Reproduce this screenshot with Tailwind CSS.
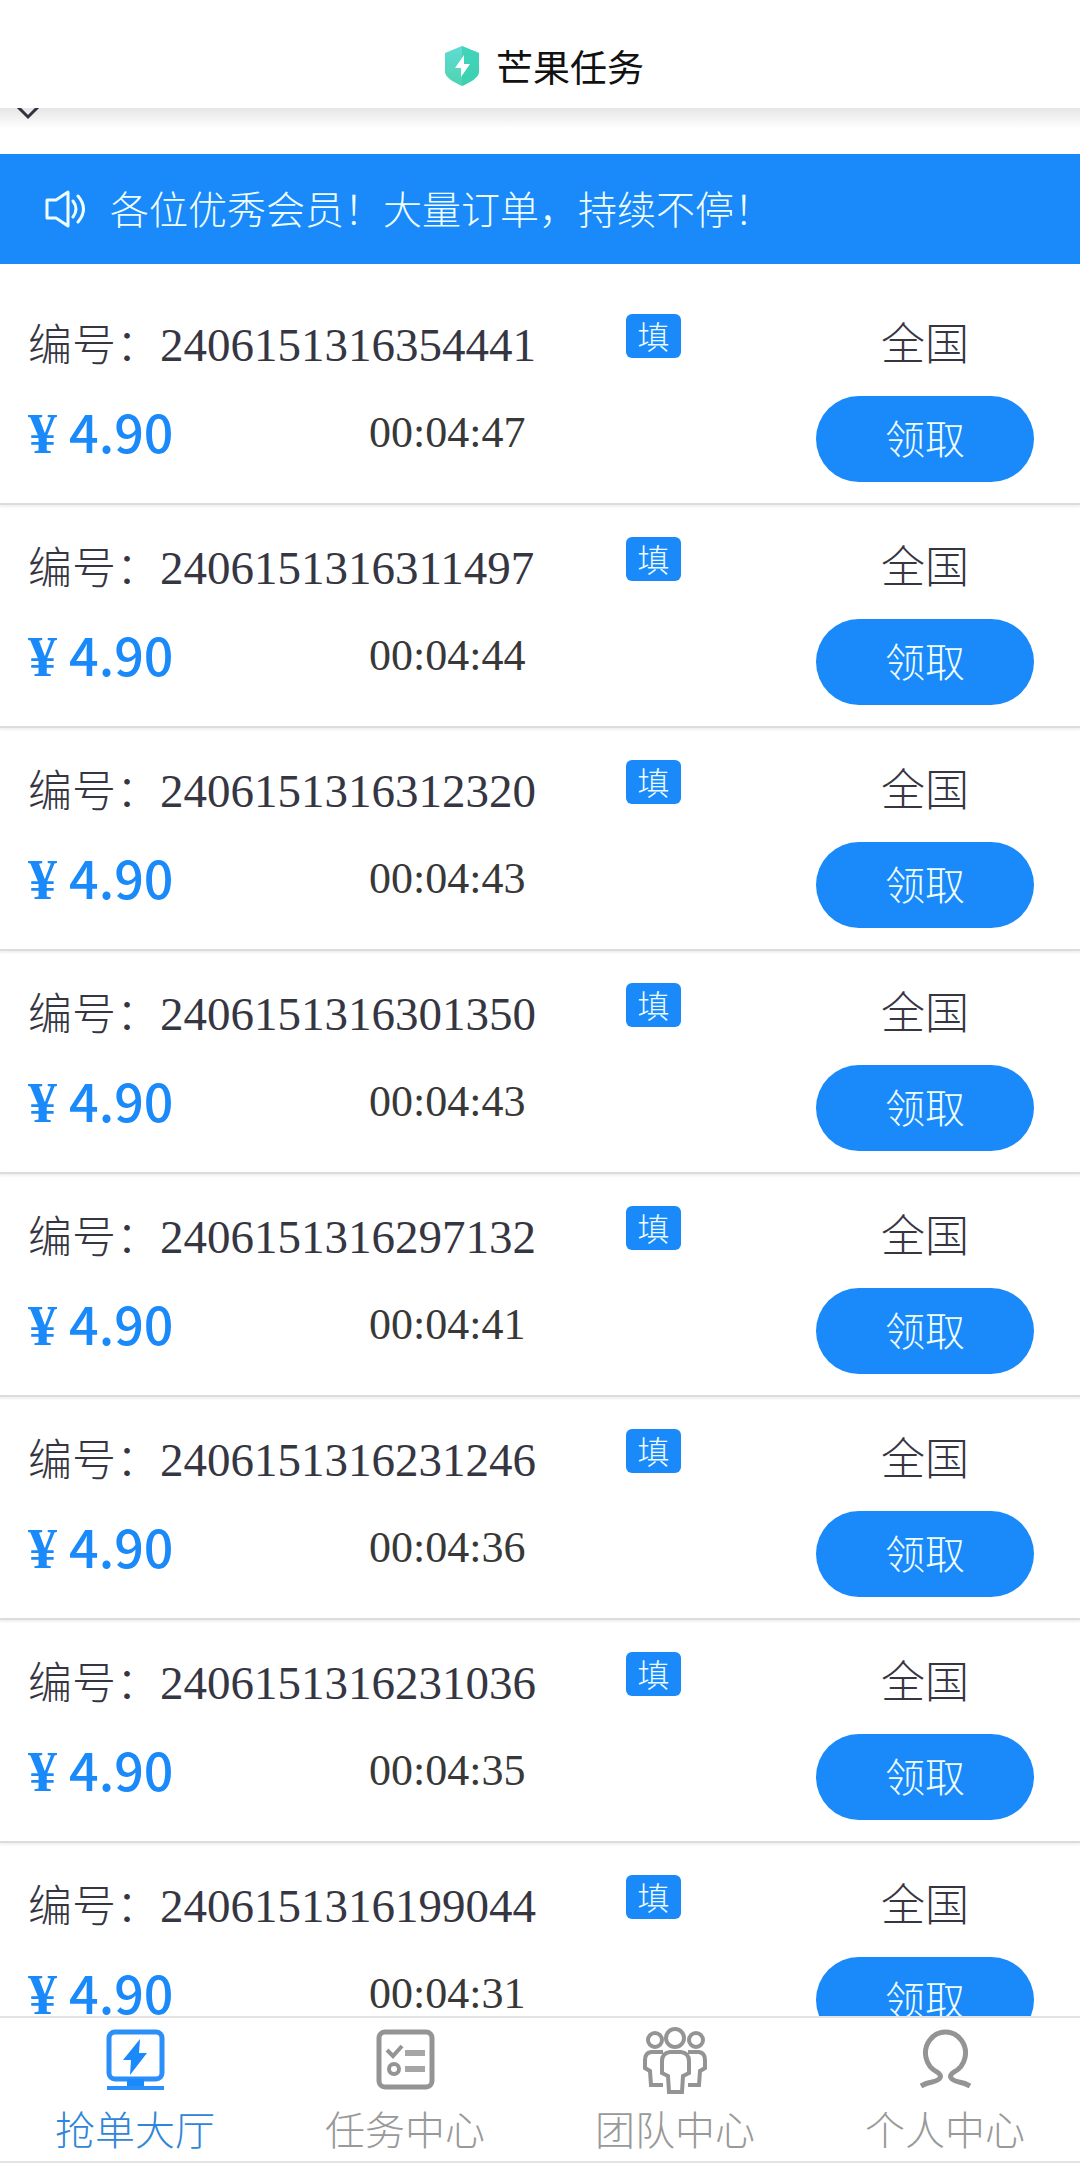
<!DOCTYPE html>
<html lang="zh-CN">
<head>
  <meta charset="UTF-8" />
  <meta name="viewport" content="width=device-width, initial-scale=1.0" />
  <title>芒果任务</title>
  <script src="https://cdn.jsdelivr.net/npm/@tailwindcss/browser@4"></script>
</head>
<body class="bg-white font-['Liberation_Serif','Noto_Sans_CJK_SC',serif] font-light text-[#363642]">
  <div class="h-screen flex flex-col overflow-hidden">
    <header class="h-27 shrink-0 flex items-end justify-center gap-4 pb-[18px] pl-2">
      <svg class="w-9 h-10 mb-1" viewBox="0 0 36 40">
        <defs>
          <linearGradient id="shield" x1="0" y1="0" x2="0" y2="1">
            <stop offset="0" stop-color="#5fdcd3" />
            <stop offset="1" stop-color="#4fd3b0" />
          </linearGradient>
        </defs>
        <path fill="url(#shield)" d="M18 0 35 7v19c0 5-8 10-17 14C9 36 1 31 1 26V7z" />
        <path fill="#2fcfae" fill-opacity=".6" d="M18 0 35 7v19c0 5-8 10-17 14z" />
        <path fill="#fff" d="M20 9 11 22h6v9l9-13h-6z" />
      </svg>
      <h1 class="font-['Noto_Sans_CJK_SC',sans-serif] font-normal text-[37px] leading-12 text-[#111]">芒果任务</h1>
    </header>

    <main class="flex-1 min-h-0 overflow-hidden">
      <div class="h-[46px] bg-linear-to-b from-[#e6e6e6] to-white to-45%">
        <svg class="w-6 h-3 ml-4" viewBox="0 0 24 12" fill="none" stroke="#33333f" stroke-width="3"><path d="M1-2 12 9 23-2" /></svg>
      </div>

      <div class="h-[110px] bg-[#1a89fa] text-[#efffff] flex items-center gap-6 px-11">
        <svg class="w-[42px] h-10" viewBox="0 0 42 40" fill="none" stroke="currentColor" stroke-width="3">
          <path d="M3 11h9l12-8v34l-12-8H3z" stroke-linejoin="round" />
          <path d="M29 12q6 8 0 16M34 7q11 13 0 26" stroke-linecap="round" />
        </svg>
        <p class="text-[39px] leading-12 pt-[3px]">各位优秀会员！大量订单，持续不停！</p>
      </div>

      <ul id="orders" class="pt-[18px]"></ul>
    </main>

    <nav class="h-[147px] mb-1 shrink-0 grid grid-cols-4 border-y-2 border-[#e4e4e4] text-[40px] leading-12 text-[#999]">
      <a href="#" class="flex flex-col items-center pt-2 gap-[18px] text-[#2f86d8]">
        <svg class="w-16 h-16 overflow-visible" viewBox="0 0 64 64" fill="none" stroke="#2b8ffa" stroke-width="5">
          <rect x="6" y="6" width="53" height="47" rx="6" />
          <path d="M24 53h17v9H24z" fill="#1a89fa" stroke="none" />
          <path d="M4 62h57" stroke-width="4" />
          <path d="M37 13 20 34h8l-1 15 17-22h-8z" fill="#1a89fa" stroke="none" />
        </svg>
        抢单大厅
      </a>
      <a href="#" class="flex flex-col items-center pt-2 gap-[18px]">
        <svg class="w-16 h-16 overflow-visible" viewBox="0 0 64 64" fill="none" stroke="#949494" stroke-width="4">
          <rect x="6" y="6" width="53" height="55" rx="6" stroke-width="5" />
          <path d="m14 24 6 6 9-10" />
          <path d="M32 27h20M32 43h20" stroke="#a6a6a6" stroke-width="6" />
          <circle cx="21" cy="43" r="5" />
        </svg>
        任务中心
      </a>
      <a href="#" class="flex flex-col items-center pt-2 gap-[18px]">
        <svg class="w-16 h-16 overflow-visible" viewBox="0 0 64 64" fill="none" stroke="#949494" stroke-width="4">
          <circle cx="12" cy="14" r="7" /><circle cx="53" cy="14" r="7" /><ellipse cx="32" cy="12" rx="9" ry="9" />
          <path d="M20 26H8q-6 1-6 8v8l5 3 1 14h12M45 26h11q6 1 6 8v8l-5 3-1 14H45" />
          <path d="M27 26q-8 1-8 9v12l6 3 1 16h13l1-16 6-3V35q0-8-8-9z" />
        </svg>
        团队中心
      </a>
      <a href="#" class="flex flex-col items-center pt-2 gap-[18px]">
        <svg class="w-16 h-16 overflow-visible" viewBox="0 0 64 64" fill="none" stroke="#949494" stroke-width="5">
          <path d="M8 60q5-3 11-4c9-2 11-6 5-10a20 21 0 1 1 17 0c-6 4-4 8 5 10q6 1 11 4" />
        </svg>
        个人中心
      </a>
    </nav>
  </div>

  <template id="orderRow">
    <li class="h-[223px] border-b-2 border-[#dcdcdc] shadow-[0_2px_2px_#f0f0f0] flex pl-7 pr-[46px]">
      <div class="w-[598px] pt-[35px] flex flex-col gap-7">
        <p class="text-[44px] leading-14 whitespace-nowrap">编号：<span class="no text-[47px]"></span></p>
        <div class="flex items-center">
          <span class="w-[341px] text-[#1a89fa] text-[58px] leading-14 font-bold">¥<span class="price ml-3 font-['Noto_Sans_CJK_SC',sans-serif] text-[52px] font-medium"></span></span>
          <time class="text-[44px] leading-14 text-[#383838]"></time>
        </div>
      </div>
      <span class="w-[55px] h-11 mt-8 rounded-md bg-[#1a89fa] text-[#efffff] text-[32px] leading-12 text-center">填</span>
      <div class="w-[218px] ml-auto pt-9 flex flex-col items-center gap-[22px]">
        <span class="text-[44px] leading-14">全国</span>
        <button type="button" class="w-full h-[86px] shrink-0 rounded-full bg-[#1a89fa] text-[#efffff] text-[40px] pt-1">领取</button>
      </div>
    </li>
  </template>

  <script>
    const orders = [
      ['2406151316354441', '00:04:47'],
      ['2406151316311497', '00:04:44'],
      ['2406151316312320', '00:04:43'],
      ['2406151316301350', '00:04:43'],
      ['2406151316297132', '00:04:41'],
      ['2406151316231246', '00:04:36'],
      ['2406151316231036', '00:04:35'],
      ['2406151316199044', '00:04:31']
    ];

    const list = document.getElementById('orders');
    const tpl = document.getElementById('orderRow');

    orders.forEach(([no, time]) => {
      const row = tpl.content.cloneNode(true);
      row.querySelector('.no').textContent = no;
      row.querySelector('.price').textContent = '4.90';
      row.querySelector('time').textContent = time;
      list.appendChild(row);
    });
  </script>
</body>
</html>
